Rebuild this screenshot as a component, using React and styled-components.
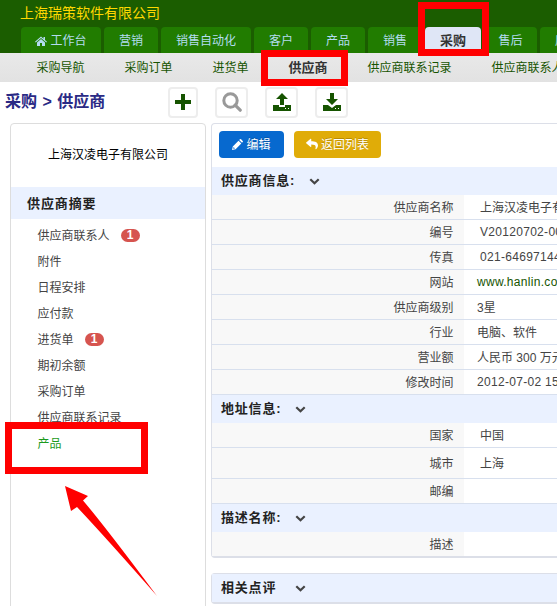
import React from "react";
import styled, { createGlobalStyle } from "styled-components";
import { FaReply } from "react-icons/fa";

const Global = createGlobalStyle`
  * { box-sizing: border-box; }
  body {
    margin: 0;
    background: #fff;
    overflow: hidden;
    font: 12px/16px "Liberation Sans", "Noto Sans CJK SC", sans-serif;
    color: #444;
  }
`;

const Page = styled.div`
  position: relative;
  width: 557px;
  height: 606px;
  overflow: hidden;
  white-space: nowrap;
`;

const Header = styled.header`
  height: 53px;
  background: #1b5d00;
  display: flex;
  flex-direction: column;
  justify-content: space-between;
`;

const Company = styled.div`
  height: 27px;
  padding-left: 20px;
  font-size: 14px;
  line-height: 26px;
  color: #ffd800;
`;

const Tabs = styled.nav`
  display: flex;
  gap: 3px;
  padding-left: 21px;
`;

const Tab = styled.div`
  flex: none;
  width: ${(p) => p.$w}px;
  height: 26px;
  display: flex;
  align-items: center;
  justify-content: center;
  gap: 3px;
  padding-top: 2px;
  border-radius: 4px 4px 0 0;
  background: ${(p) => (p.$active ? "#dfe6f6" : "#217c00")};
  color: ${(p) => (p.$active ? "#333" : "#b4dcf0")};
  font-weight: ${(p) => (p.$active ? 700 : 400)};
  font-size: ${(p) => (p.$active ? 13 : 12)}px;
`;

const SubNav = styled.nav`
  height: 29px;
  padding: 1px 0 0 36.5px;
  display: flex;
  align-items: center;
  gap: 40px;
  background: linear-gradient(#e9e9e9, #e2e2e2);
`;

const SubLink = styled.span`
  flex: none;
  font-weight: ${(p) => (p.$active ? 700 : 400)};
  font-size: ${(p) => (p.$active ? 13 : 12)}px;
  color: ${(p) => (p.$active ? "#333" : "#165400")};
`;

const Toolbar = styled.div`
  height: 41px;
  padding: 5px 0 0 5px;
  display: flex;
`;

const Heading = styled.h1`
  margin: 0;
  width: 163px;
  font-size: 16px;
  word-spacing: 1px;
  line-height: 29px;
  color: #2a2a85;
`;

const Tools = styled.div`
  display: flex;
  gap: 17px;
`;

const Tool = styled.button`
  width: ${(p) => p.$w || 33}px;
  height: 31px;
  padding: 0 0 1px;
  display: flex;
  align-items: center;
  justify-content: center;
  background: #fff;
  border: 2px solid #ededed;
  border-radius: 4px;
  color: #165400;
`;

const Columns = styled.div`
  display: flex;
  align-items: flex-start;
  gap: 5px;
  padding-left: 10px;
`;

const Sidebar = styled.aside`
  flex: none;
  width: 196px;
  height: 500px;
  border: 1px solid #ddd;
  border-radius: 4px;
`;

const SupplierName = styled.div`
  height: 63px;
  line-height: 62px;
  padding-left: 37px;
  color: #000;
`;

const SideTitle = styled.div`
  height: 32px;
  line-height: 33px;
  padding-left: 16px;
  background: #eaf1ff;
  font-size: 13px;
  font-weight: 700;
  letter-spacing: 0.9px;
  color: #222;
`;

const SideList = styled.ul`
  list-style: none;
  margin: 0;
  padding: 3px 0 0 26.5px;
`;

const SideItem = styled.li`
  height: 26px;
  padding-top: 1px;
  display: flex;
  align-items: center;
  gap: 11px;
  color: ${(p) => (p.$active ? "#1c9a1c" : "#444")};
`;

const Badge = styled.span`
  width: 19px;
  height: 13px;
  margin-top: -1px;
  border-radius: 7px;
  background: #d6544f;
  color: #fff;
  font-weight: 700;
  line-height: 13px;
  text-align: center;
`;

const Main = styled.main`
  flex: none;
  width: 380px;
  display: flex;
  flex-direction: column;
  gap: 15px;
`;

const Panel = styled.section`
  border: 1px solid #dcdfe8;
  border-bottom-width: 2px;
  border-radius: 4px;
`;

const Actions = styled.div`
  height: 43px;
  padding: 7px 0 0 7px;
  display: flex;
  gap: 10px;
`;

const Action = styled.button`
  width: ${(p) => p.$w}px;
  height: 27px;
  padding: 1px 0 0;
  display: flex;
  align-items: center;
  justify-content: center;
  gap: 3px;
  border: 0;
  border-radius: 4px;
  font: inherit;
  color: #fff;
  background: ${(p) => p.$color};
  text-shadow: 0 -1px 0 rgba(0, 0, 0, 0.2);

  svg {
    margin-top: -2px;
  }
`;

const SectionHead = styled.h2`
  margin: 0;
  height: 28px;
  padding-left: 9px;
  display: flex;
  align-items: center;
  background: #eaf1ff;
  font-size: 13px;
  letter-spacing: 0.8px;
  color: #222;
`;

const SectionTitle = styled.span`
  width: ${(p) => p.$w}px;
`;

const Row = styled.div`
  height: ${(p) => p.$h || 25}px;
  display: flex;
  border-bottom: ${(p) => (p.$last ? 0 : 1)}px solid #d8e0ee;
`;

const Label = styled.div`
  flex: none;
  width: 252px;
  padding: 1px 10.5px 0 0;
  display: flex;
  align-items: center;
  justify-content: flex-end;
  background: #f8f8f8;
`;

const Value = styled.div`
  flex: none;
  padding: ${(p) => (p.$latin ? 0 : 1)}px 0 0 ${(p) => (p.$inset ? 16 : 13)}px;
  display: flex;
  align-items: center;
  letter-spacing: ${(p) => (p.$latin ? 0.3 : 0)}px;
  color: ${(p) => (p.$link ? "#165400" : "#444")};
  white-space: pre;
`;

const RedFrame = styled.div`
  position: absolute;
  left: ${(p) => p.$x}px;
  top: ${(p) => p.$y}px;
  width: ${(p) => p.$w}px;
  height: ${(p) => p.$h}px;
  border: 7px solid #f00;
`;

const Arrow = styled.svg`
  position: absolute;
  left: 60px;
  top: 480px;
`;

const Chevron = () => (
  <svg width="11" height="8" viewBox="0 0 11 8">
    <path d="M1.3 2.2 5.5 6.2 9.7 2.2" fill="none" stroke="#444" strokeWidth="2.2" />
  </svg>
);

const HomeIcon = () => (
  <svg width="12" height="11" viewBox="0 0 12 11">
    <path
      fill="currentColor"
      d="M6 .5 8.5 2.700V1H10v3l2 1.800-.7.8L6 2 .7 6.600 0 5.800zM6 3l4 3.500V10H7V7H5v3H2V6.500z"
    />
  </svg>
);

const PlusIcon = () => (
  <svg width="16" height="16" viewBox="0 0 16 16">
    <path d="M6 0h4v6h6v4h-6v6H6v-6H0V6h6z" fill="currentColor" />
  </svg>
);

const SearchIcon = () => (
  <svg width="20" height="20" viewBox="0 0 20 20">
    <circle cx="8.5" cy="8.5" r="6.7" fill="none" stroke="#999" strokeWidth="3" />
    <path d="m13.2 13.2 5 5" stroke="#999" strokeWidth="3.2" strokeLinecap="round" />
  </svg>
);

const TransferIcon = ({ down }) => (
  <svg width="20" height="18" viewBox="0 0 20 18">
    <path
      d={down ? "M8 0h4v6h4l-6 6-6-6h4z" : "M10 0l6 6h-4v6H8V6H4z"}
      fill="currentColor"
    />
    <path
      fillRule="evenodd"
      d={
        down
          ? "M1 12h5l4 3 4-3h5v6H1zM13 15v1h1v-1zM16 15v1h1v-1z"
          : "M1 12h6v2h6v-2h6v6H1zM13 15v1h1v-1zM16 15v1h1v-1z"
      }
      fill="currentColor"
    />
  </svg>
);

const PencilIcon = () => (
  <svg width="11" height="11" viewBox="0 0 11 11">
    <path
      fillRule="evenodd"
      fill="currentColor"
      d="M0 11 .8 7.4 6.5 1.7l2.8 2.8-5.7 5.7zM1.6 8 1.2 9.8 3 9.4zM7.2 1l.7-.7q.6-.6 1.2 0l1.6 1.6q.6.6 0 1.2l-.7.7z"
    />
  </svg>
);

const tabs = [
  ["工作台", 80],
  ["营销", 54],
  ["销售自动化", 90],
  ["客户", 54],
  ["产品", 54],
  ["销售", 54],
  ["采购", 56],
  ["售后", 53],
  ["库存", 54],
];

const subLinks = ["采购导航", "采购订单", "进货单", "供应商", "供应商联系记录", "供应商联系人"];

const sideItems = [
  ["供应商联系人", 1],
  ["附件"],
  ["日程安排"],
  ["应付款"],
  ["进货单", 1],
  ["期初余额"],
  ["采购订单"],
  ["供应商联系记录"],
  ["产品"],
];

const info = [
  { label: "供应商名称", value: "上海汉凌电子有限公司", inset: true },
  { label: "编号", value: "V20120702-001", inset: true, latin: true },
  { label: "传真", value: "021-64697144", inset: true, latin: true },
  { label: "网站", value: "www.hanlin.com", link: true, latin: true },
  { label: "供应商级别", value: "3星" },
  { label: "行业", value: "电脑、软件" },
  { label: "营业额", value: "人民币 300 万元" },
  { label: "修改时间", value: "2012-07-02 15:00", latin: true },
];

const address = [
  { label: "国家", value: "中国", inset: true },
  { label: "城市", value: "上海", inset: true, h: 31 },
  { label: "邮编", value: "" },
];

const Section = ({ title, width = 74, rows = [], last }) => (
  <>
    <SectionHead>
      <SectionTitle $w={width}>{title}</SectionTitle>
      <Chevron />
    </SectionHead>
    {rows.map((r) => (
      <Row key={r.label} $h={r.h} $last={last}>
        <Label>{r.label}</Label>
        <Value $inset={r.inset} $link={r.link} $latin={r.latin}>{r.value}</Value>
      </Row>
    ))}
  </>
);

export default function App() {
  return (
    <Page>
      <Global />
      <Header>
        <Company>上海瑞策软件有限公司</Company>
        <Tabs>
          {tabs.map(([name, w]) => (
            <Tab key={name} $w={w} $active={name === "采购"}>
              {name === "工作台" && <HomeIcon />}
              {name}
            </Tab>
          ))}
        </Tabs>
      </Header>
      <SubNav>
        {subLinks.map((name) => (
          <SubLink key={name} $active={name === "供应商"}>{name}</SubLink>
        ))}
      </SubNav>
      <Toolbar>
        <Heading>采购 &gt; 供应商</Heading>
        <Tools>
          <Tool $w={30}><PlusIcon /></Tool>
          <Tool><SearchIcon /></Tool>
          <Tool><TransferIcon /></Tool>
          <Tool><TransferIcon down /></Tool>
        </Tools>
      </Toolbar>
      <Columns>
        <Sidebar>
          <SupplierName>上海汉凌电子有限公司</SupplierName>
          <SideTitle>供应商摘要</SideTitle>
          <SideList>
            {sideItems.map(([name, count]) => (
              <SideItem key={name} $active={name === "产品"}>
                {name}
                {count && <Badge>{count}</Badge>}
              </SideItem>
            ))}
          </SideList>
        </Sidebar>
        <Main>
          <Panel>
            <Actions>
              <Action $w={65} $color="#0769cf"><PencilIcon />编辑</Action>
              <Action $w={87} $color="#e0ac08"><FaReply size={12} />返回列表</Action>
            </Actions>
            <Section title="供应商信息:" width={88} rows={info} />
            <Section title="地址信息:" rows={address} />
            <Section title="描述名称:" rows={[{ label: "描述", value: "", h: 24 }]} last />
          </Panel>
          <Panel>
            <Section title="相关点评" />
          </Panel>
        </Main>
      </Columns>
      <RedFrame $x={418} $y={2} $w={71} $h={54} />
      <RedFrame $x={261} $y={50} $w={87} $h={36} />
      <RedFrame $x={5} $y={422} $w={143} $h={52} />
      <Arrow width="100" height="120" viewBox="60 480 100 120">
        <path d="M65 486 88 496 83 500.500Q104 525 157 596 Q108 540 77 507L71 511z" fill="#f00" />
      </Arrow>
    </Page>
  );
}
